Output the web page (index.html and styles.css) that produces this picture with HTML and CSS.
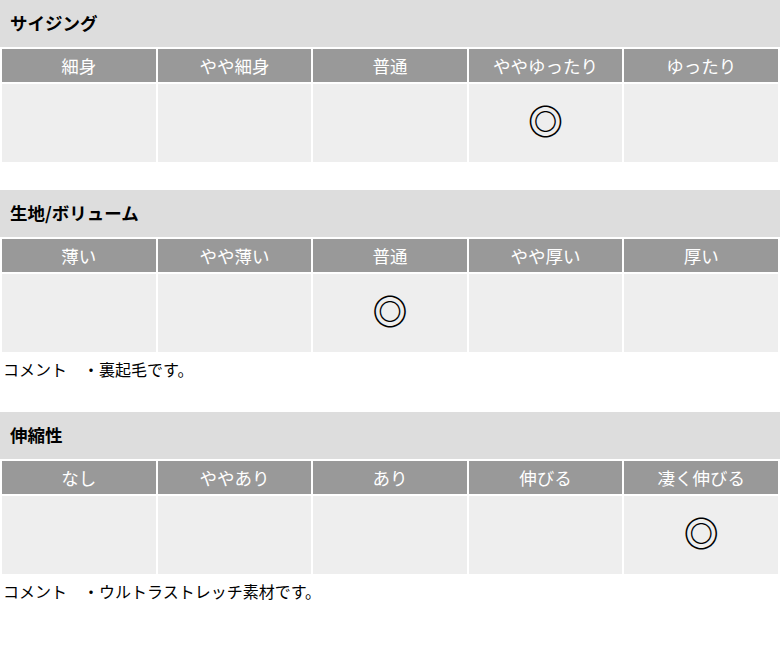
FILE: index.html
```html
<!DOCTYPE html>
<html lang="ja">
<head>
<meta charset="utf-8">
<link rel="stylesheet" href="styles.css">
</head>
<body>
<section class="spec">
  <h2 class="spec-title">サイジング</h2>
  <table class="grid">
    <tr class="head"><th>細身</th><th>やや細身</th><th>普通</th><th>ややゆったり</th><th>ゆったり</th></tr>
    <tr class="body"><td></td><td></td><td></td><td><span class="mark">◎</span></td><td></td></tr>
  </table>
</section>
<section class="spec">
  <h2 class="spec-title">生地/ボリューム</h2>
  <table class="grid">
    <tr class="head"><th>薄い</th><th>やや薄い</th><th>普通</th><th>やや厚い</th><th>厚い</th></tr>
    <tr class="body"><td></td><td></td><td><span class="mark">◎</span></td><td></td><td></td></tr>
  </table>
  <p class="comment">コメント　・裏起毛です。</p>
</section>
<section class="spec">
  <h2 class="spec-title">伸縮性</h2>
  <table class="grid">
    <tr class="head"><th>なし</th><th>ややあり</th><th>あり</th><th>伸びる</th><th>凄く伸びる</th></tr>
    <tr class="body"><td></td><td></td><td></td><td></td><td><span class="mark">◎</span></td></tr>
  </table>
  <p class="comment">コメント　・ウルトラストレッチ素材です。</p>
</section>
</body>
</html>
```

FILE: styles.css
```css
html, body {
  margin: 0;
  padding: 0;
  background: #fff;
}
body {
  font-family: "Noto Sans CJK JP", "Noto Sans", sans-serif;
  font-size: 16px;
  color: #000;
  width: 780px;
}
.spec {
  margin-bottom: 26px;
}
.spec-title {
  margin: 0;
  height: 47px;
  line-height: 45px;
  padding: 0 10px;
  background: #dddddd;
  font-size: 17.5px;
  font-weight: bold;
}
.grid {
  width: 100%;
  table-layout: fixed;
  border-collapse: separate;
  border-spacing: 2px;
}
.grid th, .grid td {
  padding: 0;
  text-align: center;
}
.head th {
  height: 33px;
  background: #999999;
  color: #fff;
  font-weight: normal;
  font-size: 17.5px;
  line-height: 33px;
}
.body td {
  height: 78px;
  background: #eeeeee;
  vertical-align: middle;
}
.mark {
  display: inline-block;
  font-size: 35px;
  line-height: 35px;
  font-weight: bold;
  position: relative;
  top: -2px;
}
.comment {
  margin: 0;
  padding-left: 3px;
  height: 32px;
  line-height: 30px;
  font-size: 16px;
}
```
